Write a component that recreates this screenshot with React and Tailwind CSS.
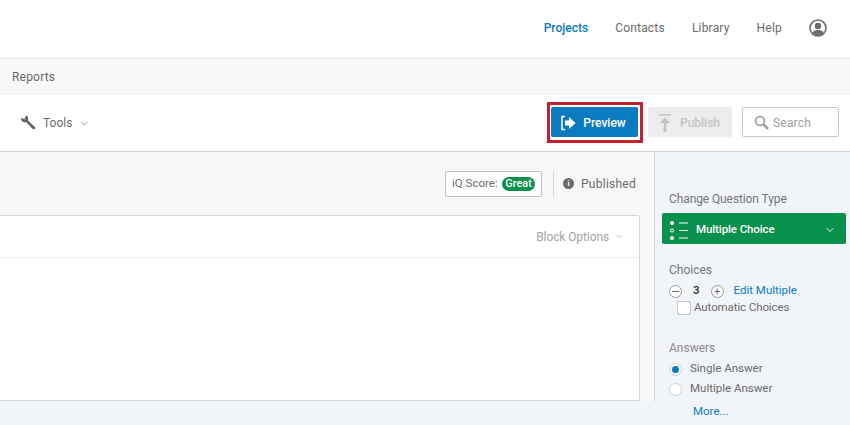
import React from 'react';
import { ChevronDown } from 'lucide-react';

const PreviewIcon = () => (
  <svg width="16" height="16" viewBox="0 0 16 16" fill="none">
    <path d="M5 1.5H2v13h3" stroke="white" strokeWidth="1.5" />
    <path d="M5 5.5h4V2l6.5 6L9 14v-3.5H5z" fill="white" />
  </svg>
);

const PublishIcon = () => (
  <svg width="14" height="18" viewBox="0 0 14 18" fill="#c4c4c4">
    <path d="M1 0h12v1.6H1z" />
    <path d="M7 3.5L12.5 9H8.4v9H5.6V9H1.5z" />
  </svg>
);

const UserIcon = () => (
  <svg width="18" height="18" viewBox="0 0 18 18">
    <circle cx="9" cy="9" r="8" fill="white" stroke="#6b6b6b" strokeWidth="1.6" />
    <circle cx="9" cy="7" r="3.2" fill="#6b6b6b" />
    <path d="M3.2 14a6.2 4.6 0 0 1 11.6 0A8 8 0 0 1 9 16.5 8 8 0 0 1 3.2 14z" fill="#6b6b6b" />
  </svg>
);

const WrenchIcon = () => (
  <svg width="15" height="15" viewBox="0 0 15 15" fill="#5f5f5f">
    <path d="M5.6.6 3.4 3.2 5 4.7 1.5 3.6.3 2.6C-.2 5 1 7.2 3.3 7.3c.7 0 1.3-.1 1.8-.4l6.7 7c.6.6 1.5.6 2 .1s.6-1.4 0-2l-6.9-6.6c.7-2.5-.3-4.6-1.3-4.8z" />
  </svg>
);

const SearchIcon = () => (
  <svg width="15" height="15" viewBox="0 0 15 15" fill="none" stroke="#a0a0a0">
    <circle cx="6" cy="6" r="4.4" strokeWidth="1.8" />
    <path d="M9.4 9.4 14 14" strokeWidth="2.6" />
  </svg>
);

const QuestionTypeIcon = () => (
  <svg width="20" height="20" viewBox="0 0 20 20">
    <circle cx="3" cy="3" r="2" fill="white" />
    <circle cx="3" cy="10.5" r="1.6" fill="none" stroke="white" />
    <circle cx="3" cy="18" r="2" fill="white" />
    <path d="M10 3h9M10 10.5h9M10 18h9" stroke="white" strokeWidth="1" />
  </svg>
);

const Round = ({ children }) => (
  <span className="w-[13px] h-[13px] rounded-full border border-[#9a9a9a] bg-white flex items-center justify-center text-[#6b6b6b]">
    {children}
  </span>
);

const App = () => {
  return (
    <div className="w-[850px] h-[425px] overflow-hidden flex flex-col bg-white text-[#6b6b6b] font-['Roboto',sans-serif] text-[12px]">
      {/* Top nav */}
      <div className="h-[59px] border-b border-[#e8e8e8] flex items-center justify-end pr-[23px] pb-[2px]">
        <span className="text-[#0b7bc1] font-medium">Projects</span>
        <span className="ml-[27px] tracking-[0.2px]">Contacts</span>
        <span className="ml-[27px] tracking-[0.2px]">Library</span>
        <span className="ml-[27px] tracking-[0.2px]">Help</span>
        <span className="ml-[27px]"><UserIcon /></span>
      </div>

      {/* Sub nav */}
      <div className="h-[35px] bg-[#f8f8f8] border-b border-[#ececec] flex items-center pl-[12px] pt-[1px] tracking-[0.2px]">
        Reports
      </div>

      {/* Toolbar */}
      <div className="h-[58px] border-b border-[#cfcfcf] flex items-center pl-[21px] pr-[11px]">
        <WrenchIcon />
        <span className="ml-[7px] pt-[1px]">Tools</span>
        <ChevronDown size={11} className="ml-[7px] mt-[1px]" strokeWidth={1.5} />
        <div className="ml-auto flex items-center">
          <div className="border-[3px] border-[#c41e30] pt-[2px] pb-[3px] pl-[1px] pr-[2px] w-[96px] h-[41px]">
            <button className="w-full h-full bg-[#0b7bc1] rounded-[2px] text-white font-medium flex items-center justify-center gap-[7px] pt-[1px] pr-[3px]">
              <PreviewIcon />
              Preview
            </button>
          </div>
          <div className="ml-[5px] mb-[1px] w-[84px] h-[30px] bg-[#ededed] rounded-[2px] flex items-center justify-center gap-[8px] pt-[1px] pr-[2px] text-[#c4c4c4] font-medium">
            <PublishIcon />
            Publish
          </div>
          <div className="ml-[10px] mb-[1px] w-[97px] h-[30px] bg-white border border-[#c8c8c8] rounded-[2px] flex items-center pl-[11px] gap-[4px] pt-[1px] text-[#a0a0a0] tracking-[0.2px]">
            <SearchIcon />
            Search
          </div>
        </div>
      </div>

      {/* Body */}
      <div className="flex-1 flex min-h-0">
        <div className="w-[655px] flex flex-col">
          <div className="h-[249px] bg-[#f8f8f8] flex flex-col pr-[14px] border-r border-[#d6d6d6]">
            <div className="h-[63px] flex items-center justify-end shrink-0 pr-[4px]">
              <div className="w-[97px] h-[26px] bg-white border border-[#bdbdbd] rounded-[2px] flex items-center pl-[6px] gap-[4px] text-[11.5px]">
                iQ Score:
                <span className="bg-[#07914c] text-white font-medium rounded-full px-[3.5px] h-[14px] leading-[14px] text-[11px]">Great</span>
              </div>
              <div className="w-px h-[26px] bg-[#d8d8d8] ml-[11px]" />
              <div className="ml-[9px] w-[11px] h-[11px] rounded-full bg-[#6b6b6b] text-white text-[8px] font-bold flex items-center justify-center">i</div>
              <span className="ml-[7px] tracking-[0.25px]">Published</span>
            </div>
            <div className="flex-1 bg-white border border-l-0 border-[#d6d6d6] rounded-tr-[3px]">
              <div className="h-[42px] border-b border-[#ececec] flex items-center justify-end pr-[14px] gap-[5px] text-[#a5a5a5] tracking-[-0.1px]">
                Block Options
                <ChevronDown size={11} strokeWidth={1.5} />
              </div>
            </div>
          </div>
          <div className="flex-1 bg-[#f1f4f8]" />
        </div>

        {/* Sidebar */}
        <div className="flex-1 bg-[#f1f4f8] flex flex-col pl-[7px] pr-[4px] pt-[40px] text-[11.5px]">
          <div className="pl-[7px] leading-[14px] text-[12px] tracking-[-0.1px] text-[#767676]">Change Question Type</div>
          <div className="mt-[7px] h-[31px] bg-[#07914c] rounded-[2px] flex items-center pl-[7px] pr-[10px] pt-[2px] text-white font-medium tracking-[-0.1px]">
            <QuestionTypeIcon />
            <span className="ml-[7px]">Multiple Choice</span>
            <ChevronDown size={12} className="ml-auto" strokeWidth={1.8} />
          </div>

          <div className="mt-[19px] pl-[7px] leading-[14px] text-[12px] text-[#767676]">Choices</div>
          <div className="mt-[7px] pl-[7px] flex items-center h-[14px]">
            <Round><span className="w-[7px] h-px bg-[#6b6b6b]" /></Round>
            <span className="ml-[11px] font-medium text-[#333]">3</span>
            <span className="ml-[11px]"><Round><span className="text-[11px] leading-none">+</span></Round></span>
            <span className="ml-[10px] text-[#0b7bc1]">Edit Multiple</span>
          </div>
          <div className="mt-[2px] pl-[15px] flex items-center h-[16px]">
            <span className="w-[14px] h-[14px] bg-white border border-[#c8c8c8]" />
            <span className="ml-[3px] tracking-[-0.1px]">Automatic Choices</span>
          </div>

          <div className="mt-[25px] pl-[7px] leading-[14px] text-[12px] text-[#8a8a8a]">Answers</div>
          <div className="mt-[4px] pl-[7px] flex items-center h-[20px]">
            <span className="w-[13px] h-[13px] rounded-full bg-white border border-[#d0d0d0] flex items-center justify-center">
              <span className="w-[7px] h-[7px] rounded-full bg-[#0b7bc1]" />
            </span>
            <span className="ml-[8px]">Single Answer</span>
          </div>
          <div className="pl-[7px] flex items-center h-[20px]">
            <span className="w-[13px] h-[13px] rounded-full bg-white border border-[#d0d0d0]" />
            <span className="ml-[8px]">Multiple Answer</span>
          </div>
          <div className="pl-[31px] mt-[5px] text-[#0b7bc1] leading-[14px]">More...</div>
        </div>
      </div>
    </div>
  );
};

export default App;
